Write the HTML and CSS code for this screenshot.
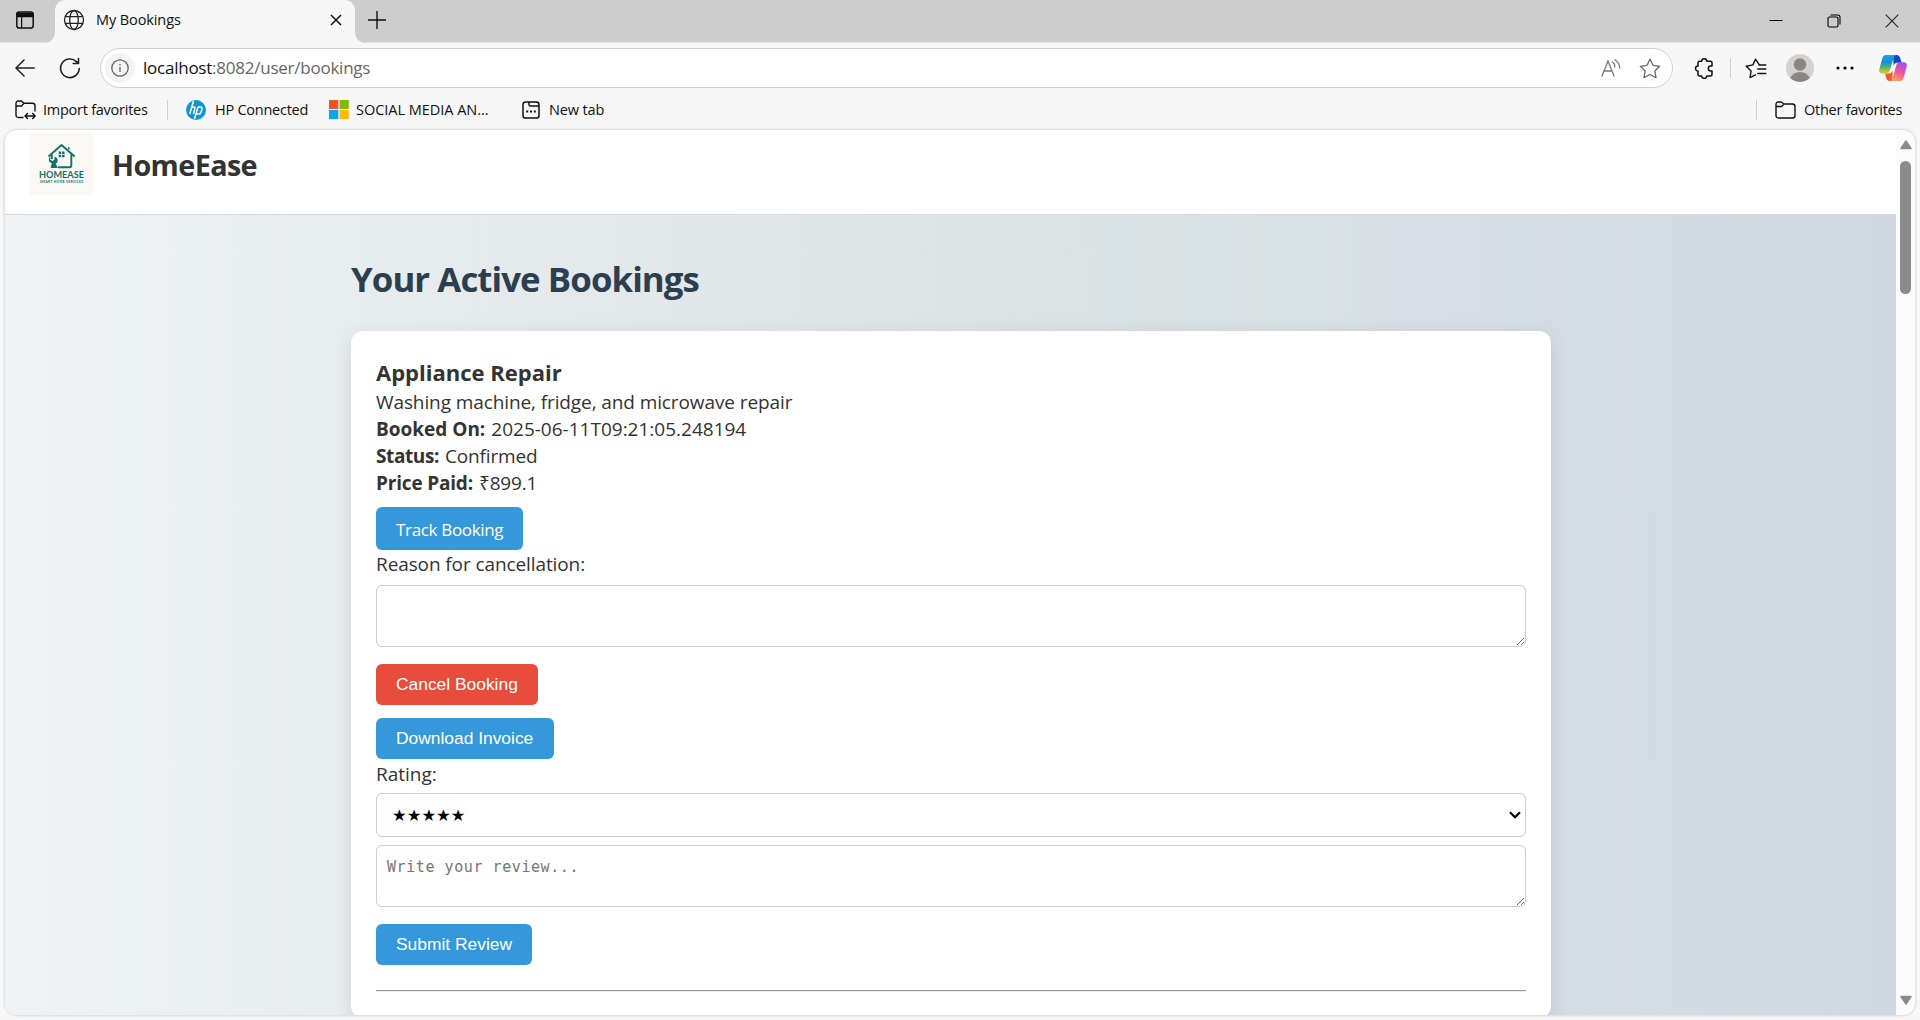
FILE: index.html
```html
<!DOCTYPE html>
<html lang="en">
<head>
<meta charset="utf-8">
<title>My Bookings</title>
<link rel="stylesheet" href="styles.css">
</head>
<body>
<div class="browser">
  <div class="tabstrip">
    <div class="tab-actions">
      <svg width="20" height="20" viewBox="0 0 20 20" fill="none" stroke="#111" stroke-width="1.5"><rect x="1.8" y="2" width="16.4" height="16" rx="2.6"/><path d="M2 3.5h16v3H2z" fill="#111"/><path d="M6.6 6v12" stroke-width="1.2"/></svg>
    </div>
    <div class="tab">
      <svg width="22" height="22" viewBox="0 0 22 22" fill="none" stroke="#222" stroke-width="1.3"><circle cx="11" cy="11" r="9.5"/><ellipse cx="11" cy="11" rx="4.3" ry="9.5"/><path d="M2.4 7.6h17.2M2.4 14.4h17.2"/></svg>
      <span class="tab-title">My Bookings</span>
      <svg class="tab-close" width="12" height="12" viewBox="0 0 12 12" stroke="#111" stroke-width="1.5"><path d="M1 1l10 10M11 1L1 11"/></svg>
    </div>
    <svg class="new-tab" width="18" height="18" viewBox="0 0 18 18" stroke="#111" stroke-width="1.4"><path d="M9 0v18M0 9h18"/></svg>
    <div class="window-controls">
      <svg width="14" height="14" viewBox="0 0 14 14" stroke="#000" stroke-width="1"><path d="M.5 6.5h13"/></svg>
      <svg width="14" height="14" viewBox="0 0 14 14" fill="none" stroke="#000" stroke-width="1.1"><rect x="1" y="3" width="10" height="10" rx="1.5"/><path d="M3.5 1h7.300q2.200 0 2.200 2.200v7.300"/></svg>
      <svg width="14" height="14" viewBox="0 0 14 14" stroke="#222" stroke-width="1.1"><path d="M.7.7l12.600 12.600M13.300.7L.7 13.300"/></svg>
    </div>
  </div>

  <div class="toolbar">
    <svg class="back" width="20" height="18" viewBox="0 0 20 18" fill="none" stroke="#222" stroke-width="1.5" stroke-linecap="round" stroke-linejoin="round"><path d="M19.200 9H1M9 1L1 9l8 8"/></svg>
    <svg class="reload" width="22" height="22" viewBox="0 0 22 22" fill="none" stroke="#222" stroke-width="1.6" stroke-linecap="round" stroke-linejoin="round"><path d="M20.200 11.500A9.300 9.300 0 1 1 17.400 4.600L19.300 6.400M19.500 1.500v5h-5.300"/></svg>
    <div class="address">
      <span class="site-info"><svg width="18" height="18" viewBox="0 0 18 18" fill="none" stroke="#666" stroke-width="1.3"><circle cx="9" cy="9" r="8.200"/><path d="M9 8v5M9 5v1.500"/></svg></span>
      <span class="url"><b>localhost</b>:8082/user/bookings</span>
      <svg class="read-aloud" width="20" height="18" viewBox="0 0 20 18" fill="none" stroke="#777" stroke-width="1.300" stroke-linecap="round"><path d="M1 17L7 2l6 15M3.200 12h7.600M11.500 3q2.500 1.800 2.300 5M14 .8q4.600 3 4.700 8.200"/></svg>
      <svg class="star" width="22" height="21" viewBox="0 0 22 21" fill="none" stroke="#666" stroke-width="1.300" stroke-linejoin="round"><path d="M11 1.200l3 6.100 6.700 1-4.900 4.700 1.200 6.700-6-3.200-6 3.200 1.200-6.700L1.300 8.300l6.700-1z"/></svg>
    </div>
    <svg class="extensions" width="20" height="21" viewBox="0 0 20 21" fill="none" stroke="#111" stroke-width="1.500" stroke-linejoin="round"><path d="M5.500 3.300H7.700a2.500 2.500 0 0 1 5 0H16.500q1.500 0 1.500 1.500V8h-1.200a2.400 2.400 0 0 0 0 4.900H18v3.500q0 1.500-1.500 1.500h-3.800a2.500 2.500 0 0 1-5 0H5.500Q4 17.900 4 16.400V13a2.500 2.500 0 0 1 0-5V4.800Q4 3.300 5.500 3.300z"/></svg>
    <i class="divider"></i>
    <svg class="favorites" width="22" height="21" viewBox="0 0 22 21" fill="none" stroke="#111" stroke-width="1.400" stroke-linejoin="round" stroke-linecap="round"><path d="M14.200 6.600L10.500 1.200 7.900 6.900 1.200 8.300l4.900 4.700L5 19.600l5.500-2.700M14 7h6.800M12.800 11h8M12.800 15.500h8"/></svg>
    <svg class="profile" width="28" height="28" viewBox="0 0 28 28"><circle cx="14" cy="14" r="14" fill="#d4d2d0"/><circle cx="14" cy="10.500" r="6.200" fill="#8a8683"/><path d="M4.300 24.100Q7 18 14 18t9.700 6.100A14 14 0 0 1 4.300 24.100z" fill="#8a8683"/></svg>
    <svg class="more" width="18" height="4" viewBox="0 0 18 4"><circle cx="2" cy="2" r="1.600"/><circle cx="9" cy="2" r="1.600"/><circle cx="16" cy="2" r="1.600"/></svg>
    <svg class="copilot" width="28" height="26" viewBox="0 0 28 26">
      <defs>
        <linearGradient id="cool" x1="0" y1="0" x2="0" y2="1"><stop offset="0" stop-color="#18a5ee"/><stop offset=".38" stop-color="#158ede"/><stop offset=".65" stop-color="#4fb26a"/><stop offset="1" stop-color="#f5cf12"/></linearGradient>
        <linearGradient id="warm" x1=".7" y1="0" x2=".3" y2="1"><stop offset="0" stop-color="#a350f0"/><stop offset=".5" stop-color="#ee5596"/><stop offset="1" stop-color="#ffa060"/></linearGradient>
      </defs>
      <path d="M14 0h4q2.300 0 3 2.500l1.700 5.200H18q-2.500 0-3.400 3z" fill="#1648c9"/>
      <path d="M13.500 26h-3.200q-2.200 0-2.900-2.400L6 18.500h4q2.500 0 3.500-3.200z" fill="#f15a2c"/>
      <path d="M6.800 0H17q-1.800.6-2.600 3.300l-3.700 12.400q-.9 3-3.900 3H3.500Q-.8 18.700.4 14L3.200 3.700Q4.200 0 6.800 0z" fill="url(#cool)"/>
      <path d="M21.200 26H11q1.800-.6 2.600-3.300l3.700-12.400q.9-3 3.900-3h3.300q4.300 0 3.100 4.700L24.800 22.300Q23.800 26 21.200 26z" fill="url(#warm)"/>
    </svg>
  </div>

  <div class="bookmarks">
    <svg class="import" width="21" height="20" viewBox="0 0 21 20" fill="none" stroke="#111" stroke-width="1.400" stroke-linejoin="round" stroke-linecap="round"><path d="M8 17.500H3.500Q1 17.500 1 15V3.500Q1 1 3.500 1h3L9 3.300h8.500Q20 3.300 20 5.800V11M1 6h5.500L9 3.300M10.500 16h9M12.500 13.500L10 16l2.500 2.500M17.700 13.500l2.500 2.500-2.500 2.500"/></svg>
    <span class="bm bm-import">Import favorites</span>
    <i class="divider"></i>
    <svg class="hp" width="20" height="20" viewBox="0 0 20 20"><circle cx="10" cy="10" r="10" fill="#0e96d8"/><path d="M7.500 1L3.800 14M5.200 8.200Q9.800 5.500 8.800 9L7.400 14M12 7L8.400 19M12 7h2.500q2 0 1.400 2l-.8 3q-.5 2-2.500 2h-2" fill="none" stroke="#fff" stroke-width="1.500"/></svg>
    <span class="bm bm-hp">HP Connected</span>
    <svg class="ms" width="20" height="19" viewBox="0 0 20 19"><path d="M0 0h9.300v9H0z" fill="#f35325"/><path d="M10.500 0h9.300v9h-9.300z" fill="#81bc06"/><path d="M0 10h9.300v9H0z" fill="#05a6f0"/><path d="M10.500 10h9.300v9h-9.300z" fill="#ffba08"/></svg>
    <span class="bm bm-social">SOCIAL MEDIA AN...</span>
    <svg class="page" width="18" height="18" viewBox="0 0 18 18" fill="none" stroke="#111" stroke-width="1.500"><rect x="1" y="1" width="16" height="16" rx="2.600"/><path d="M7 1v2.500Q7 5 8.500 5H17"/><path d="M4.200 10.500h2M8 10.500h2M11.800 10.500h2" stroke-width="1.900"/></svg>
    <span class="bm bm-new">New tab</span>
    <div class="other">
      <i class="divider"></i>
      <svg width="21" height="18" viewBox="0 0 21 18" fill="none" stroke="#111" stroke-width="1.400" stroke-linejoin="round"><path d="M1 3.500Q1 1 3.500 1h3L9 3h8.500Q20 3 20 5.500v9Q20 17 17.500 17h-14Q1 17 1 14.500zM1 5.500h5.500L9 3"/></svg>
      <span class="bm bm-other">Other favorites</span>
    </div>
  </div>

  <div class="viewport">
    <div class="page-body">
      <header class="site-header">
        <svg class="logo" width="63" height="62" viewBox="0 0 63 62">
          <rect width="63" height="62" fill="#f9f8f5"/>
          <g fill="none" stroke="#16706a" stroke-width="1.900" stroke-linejoin="round"><path d="M18.500 23.500L31.500 12l13.200 11.500M21.800 21.500v4.500M41.300 21.500V32.500q0 1.700-1.700 1.700H28"/><path d="M38.800 16.500v-2.300" stroke-width="1.500"/></g>
          <path d="M28.700 18.500h2.500V21h-2.500zM32 18.500h2.500V21H32zM28.700 21.800h2.500v2.500h-2.500zM32 21.800h2.500v2.500H32z" fill="#16706a"/>
          <path d="M20.300 23.500v3.200l2.200 1.200 2-1.200v-3.300q3.300 1 3.200 4.300-.2 2-2 3l2.200 4.200h-6.400q-1.500-.5-.5-2.500l1-1.800q-3-1-3.200-3.700 0-2.300 1.500-3.400z" fill="#16706a"/>
          <text class="logo-name" x="31.500" y="44.800" textLength="45" lengthAdjust="spacingAndGlyphs">HOMEASE</text>
          <text class="logo-sub" x="31.500" y="49.600" textLength="43" lengthAdjust="spacing">SMART HOME SERVICES</text>
        </svg>
        <span class="brand">HomeEase</span>
      </header>
      <main>
        <h1>Your Active Bookings</h1>
        <section class="card">
          <h2>Appliance Repair</h2>
          <p class="desc">Washing machine, fridge, and microwave repair</p>
          <p class="row"><strong>Booked On:</strong><span>2025-06-11T09:21:05.248194</span></p>
          <p class="row status"><strong>Status:</strong><span>Confirmed</span></p>
          <p class="row price"><strong>Price Paid:</strong><span>₹899.1</span></p>
          <a class="btn track">Track Booking</a>
          <p class="reason">Reason for cancellation:</p>
          <textarea class="field"></textarea>
          <button class="btn danger cancel">Cancel Booking</button>
          <button class="btn download">Download Invoice</button>
          <p class="rating">Rating:</p>
          <div class="field select"><span>★★★★★</span><svg width="12" height="8" viewBox="0 0 12 8" fill="none" stroke="#000" stroke-width="2.200"><path d="M1 1.200l5 5 5-5"/></svg></div>
          <textarea class="field review" placeholder="Write your review..."></textarea>
          <button class="btn submit">Submit Review</button>
          <hr>
        </section>
      </main>
    </div>
    <div class="scrollbar">
      <svg width="12" height="10" viewBox="0 0 12 10"><path d="M6 1l5 7.500H1z" fill="#8b8b8b" stroke="#8b8b8b" stroke-width="1.500" stroke-linejoin="round"/></svg>
      <i class="thumb"></i>
      <svg class="down" width="12" height="10" viewBox="0 0 12 10"><path d="M6 9l5-7.500H1z" fill="#8b8b8b" stroke="#8b8b8b" stroke-width="1.500" stroke-linejoin="round"/></svg>
    </div>
  </div>
</div>
</body>
</html>
```
FILE: styles.css
```css
* { box-sizing: border-box; }

body {
  margin: 0;
  font-family: "Open Sans", "Noto Sans", sans-serif;
  color: #333;
}

h1, h2, p { margin: 0; }
svg { display: block; flex: none; }

.browser {
  display: flex;
  flex-direction: column;
  width: 1920px;
  height: 1020px;
  background: #f7f7f7;
  overflow: hidden;
}

/* Tab strip */
.tabstrip {
  display: flex;
  height: 43px;
  flex: none;
  background: #cdcdcd;
  border-bottom: 1px solid #e4e4e4;
}
.tab-actions {
  width: 55px;
  height: 42px;
  padding: 10px 0 0 15px;
}
.tab {
  position: relative;
  display: flex;
  align-items: center;
  width: 300px;
  height: 43px;
  padding: 0 13px 3px 8px;
  background: #f7f7f7;
  border-radius: 10px 10px 0 0;
}
.tab::before,
.tab::after {
  content: "";
  position: absolute;
  bottom: 0;
  width: 10px;
  height: 10px;
}
.tab::before { left: -10px; background: radial-gradient(circle at 0 0, #cdcdcd 9.5px, #f7f7f7 10px); }
.tab::after { right: -10px; background: radial-gradient(circle at 100% 0, #cdcdcd 9.5px, #f7f7f7 10px); }
.tab-title { margin: -1px 0 0 11px; font-size: 14.5px; letter-spacing: -.1px; color: #111; white-space: nowrap; }
.tab-close { margin-left: auto; }
.new-tab { margin: 11px 0 0 13px; }
.window-controls {
  display: flex;
  gap: 44px;
  margin: 14px 21px 0 auto;
}

/* Toolbar */
.toolbar {
  display: flex;
  align-items: center;
  height: 50px;
  flex: none;
  padding-left: 15px;
}
.reload { margin-left: 24px; }
.address {
  display: flex;
  align-items: center;
  width: 1573px;
  height: 40px;
  margin-left: 19px;
  padding: 0 11px 0 4px;
  background: #fff;
  border: 1px solid #cfcfcf;
  border-radius: 20px;
}
.site-info {
  display: grid;
  place-items: center;
  width: 30px;
  height: 30px;
  border-radius: 50%;
  background: #f4f4f4;
}
.url { margin-left: 8px; padding-bottom: 2px; font-size: 17px; letter-spacing: -.24px; color: #666; white-space: nowrap; }
.url b { font-weight: 400; color: #111; }
.read-aloud { margin-left: auto; }
.star { margin-left: 18px; }
.extensions { margin-left: 21px; }
.divider { width: 1px; height: 20px; flex: none; background: #d0d0d0; }
.toolbar .divider { margin: 0 14px 0 16px; }
.profile { margin-left: 19px; }
.more { margin-left: 22px; }
.copilot { margin-left: 25px; }

/* Favourites bar */
.bookmarks {
  display: flex;
  align-items: center;
  height: 36px;
  flex: none;
  padding: 0 18px 3px 15px;
}
.bm { font-size: 14.5px; letter-spacing: -.25px; color: #111; white-space: nowrap; }
.import { margin-right: 7px; }
.bm-import { width: 105px; }
.bookmarks > .divider { margin: 0 18px 0 19px; }
.bm-hp { width: 94px; margin-left: 9px; }
.ms { margin-left: 20px; }
.bm-social { width: 134px; margin-left: 7px; letter-spacing: -.03px; }
.page { margin-left: 32px; }
.bm-new { margin-left: 9px; letter-spacing: -.15px; }
.other { display: flex; align-items: center; margin-left: auto; }
.other svg { margin: 0 8px 0 18px; }
.bm-other { width: 98px; }

/* Page viewport */
.viewport {
  display: flex;
  width: 1910px;
  height: 885px;
  flex: none;
  margin: 1px 5px 0;
  border-radius: 12px;
  overflow: hidden;
  background: #fcfcfc;
  box-shadow: 0 0 3px rgba(0, 0, 0, .25);
}
.page-body {
  width: 1891px;
  height: 885px;
  overflow: hidden;
  background: linear-gradient(to right, #eef2f2, #e7ecee 20%, #e1e7e9 40%, #dbe3e5 54%, #d7e0e2 70%, #d6dde5 75%, #cfd8e0);
}
.site-header {
  display: flex;
  align-items: flex-start;
  height: 85px;
  padding: 3px 25px 0;
  background: #fff;
  border-bottom: 1px solid #d8d8d8;
}
.logo-name { font: 700 9.5px Lato, sans-serif; fill: #16706a; text-anchor: middle; }
.logo-sub { font: 700 3.2px Lato, sans-serif; fill: #16706a; text-anchor: middle; }
.brand { margin: 13px 0 0 19px; font-size: 28.8px; font-weight: 700; line-height: 38px; letter-spacing: -.63px; white-space: nowrap; }

main { width: 1200px; margin-left: 346px; }
h1 { margin-top: 39px; font-size: 34.8px; line-height: 50px; letter-spacing: -.93px; color: #2c3e50; white-space: nowrap; }
.card {
  display: flex;
  flex-direction: column;
  align-items: flex-start;
  height: 687px;
  margin-top: 27px;
  padding: 25px;
  background: #fff;
  border-radius: 12px;
  box-shadow: 0 5px 20px rgba(0, 0, 0, .1);
}
h2 { font-size: 22px; line-height: 32px; margin-bottom: 1px; }
.desc, .row, .reason, .rating { font-size: 19px; line-height: 27px; white-space: nowrap; }
.desc, .reason { letter-spacing: -.1px; }
.row strong { margin-right: 6px; }
.status strong { letter-spacing: -.4px; }
.status span { letter-spacing: -.15px; }
.price { letter-spacing: -.18px; }
.btn {
  display: flex;
  align-items: center;
  height: 41px;
  padding: 0 20px;
  border: 0;
  border-radius: 6px;
  background: #3498db;
  color: #fff;
  font: 17.4px "Liberation Sans", Arial, sans-serif;
  white-space: nowrap;
}
.track { width: 147px; height: 43px; margin-top: 10px; padding-top: 2px; font: 17px "Open Sans", sans-serif; letter-spacing: -.33px; }
.reason { margin-top: 1px; }
.field {
  width: 1150px;
  height: 62px;
  flex: none;
  margin: 7px 0 0;
  padding: 10px;
  background: #fff;
  border: 1px solid #ccc;
  border-radius: 6px;
}
.danger { background: #e74c3c; }
.cancel { width: 162px; margin-top: 17px; }
.download { width: 178px; margin-top: 13px; }
.rating { margin-top: 2px; }
.select {
  display: flex;
  align-items: center;
  justify-content: space-between;
  height: 44px;
  margin-top: 5px;
  padding: 0 4px 0 15px;
  color: #000;
  font: 16.4px "DejaVu Sans", sans-serif;
}
.review { margin-top: 8px; font: 15px/22px "DejaVu Sans Mono", monospace; letter-spacing: .57px; }
.review::placeholder { color: #757575; }
.submit { width: 156px; margin-top: 17px; }
hr { width: 1150px; margin: 25px 0 0; border: 0; border-top: 1px solid #9a9a9a; border-bottom: 1px solid #eee; }

.scrollbar {
  display: flex;
  flex-direction: column;
  align-items: center;
  width: 19px;
  padding: 10px 0;
}
.thumb { width: 11px; height: 133px; margin-top: 11px; border-radius: 6px; background: #8b8b8b; }
.down { margin-top: auto; }
```
